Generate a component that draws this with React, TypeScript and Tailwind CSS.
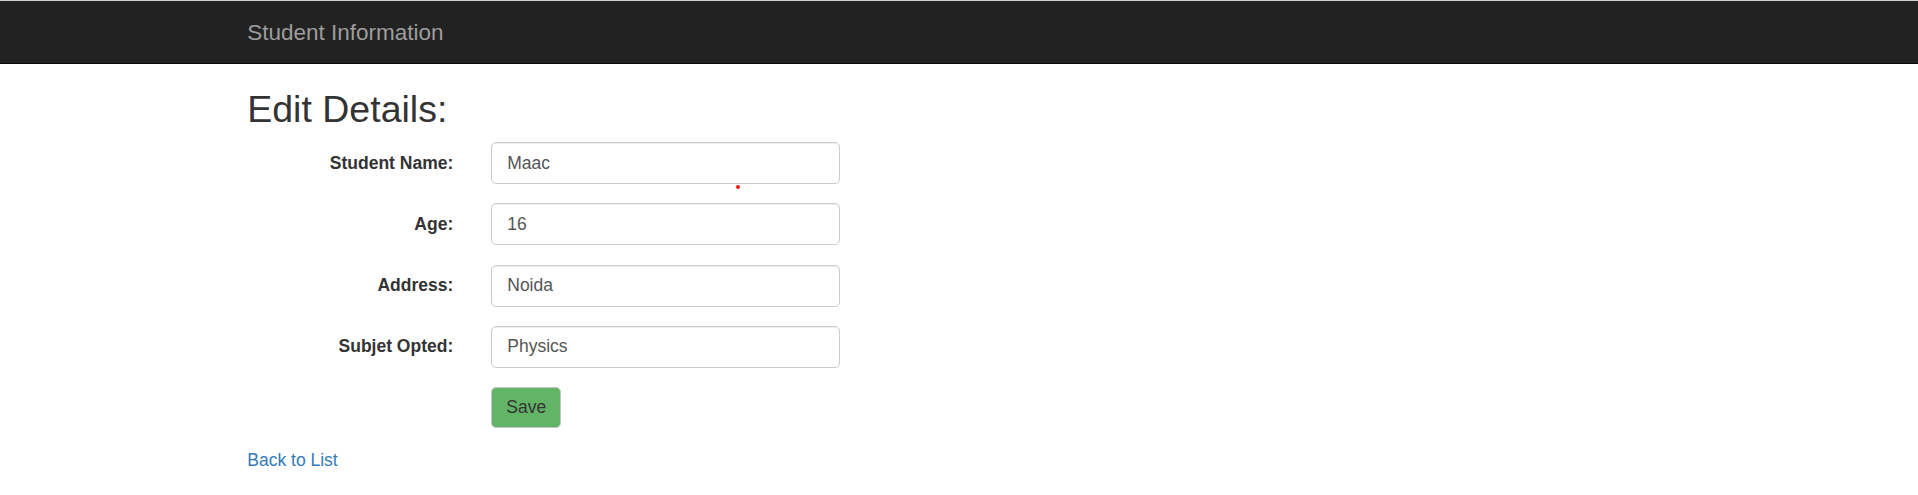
import React from 'react';

type Field = {
  label: string;
  value: string;
};

const fields: Field[] = [
  { label: 'Student Name:', value: 'Maac' },
  { label: 'Age:', value: '16' },
  { label: 'Address:', value: 'Noida' },
  { label: 'Subjet Opted:', value: 'Physics' },
];

export default function App() {
  return (
    <div className="relative min-h-screen bg-white font-['Liberation_Sans',Arial,sans-serif] text-[17.5px] leading-[25px] text-[#333]">
      {/* top edge line */}
      <div className="h-px bg-[#cfcfcf]" />

      {/* navbar */}
      <nav className="h-[63px] border-b border-[#080808] bg-[#222]">
        <div className="mx-auto w-[1462.5px] px-[19.5px]">
          <a className="block pt-[18.5px] text-[22.5px] leading-[25px] text-[#9d9d9d]">
            Student Information
          </a>
        </div>
      </nav>

      <div className="mx-auto w-[1462.5px] px-[19.5px]">
        <h2 className="mt-[25px] mb-[12px] text-[37.5px] leading-[41px] text-[#333]">Edit Details:</h2>

        <form className="grid grid-cols-[206px_1fr] gap-x-[38px] gap-y-[19.25px]">
          {fields.map((f) => (
            <React.Fragment key={f.label}>
              <label className="pt-[8.5px] text-right font-bold">{f.label}</label>
              <div>
                <input
                  type="text"
                  defaultValue={f.value}
                  className="h-[42px] w-[349px] rounded-[5px] border border-[#ccc] bg-white px-[15px] text-[17.5px] text-[#555] shadow-[inset_0_1px_1px_rgba(0,0,0,0.075)] outline-none"
                />
              </div>
            </React.Fragment>
          ))}
          <div />
          <div>
            <button
              type="button"
              className="h-[41px] w-[70px] rounded-[5px] border border-[#c6c6c6] bg-[#62b466] text-[17.5px] text-[#333]"
            >
              Save
            </button>
          </div>
        </form>

        <div className="mt-[20px]">
          <a className="text-[#337ab7]">Back to List</a>
        </div>
      </div>

      {/* stray red dot over the form */}
      <div className="absolute left-[736px] top-[185px] h-[4px] w-[4px] rounded-full bg-[#f01c1c]" />
    </div>
  );
}
